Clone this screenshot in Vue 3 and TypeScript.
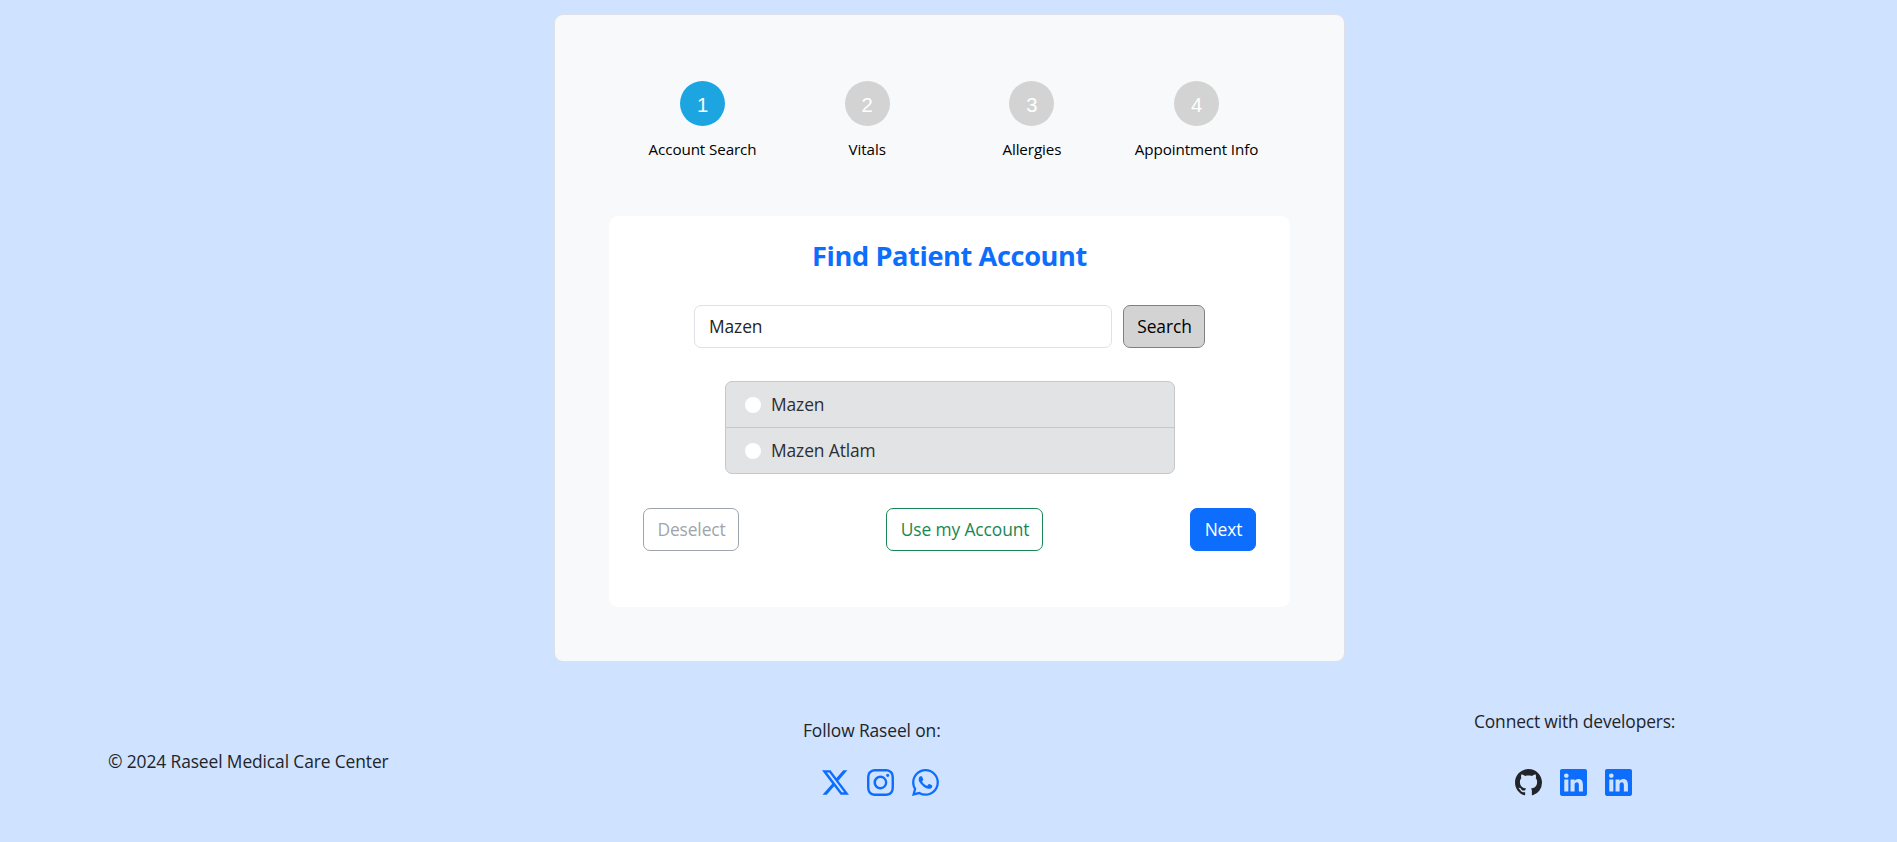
<script setup lang="ts">
import { ref } from 'vue'

interface Step { num: number; label: string }
const steps: Step[] = [
  { num: 1, label: 'Account Search' },
  { num: 2, label: 'Vitals' },
  { num: 3, label: 'Allergies' },
  { num: 4, label: 'Appointment Info' },
]
const current = ref<number>(1)
const query = ref<string>('Mazen')
const results: string[] = ['Mazen', 'Mazen Atlam']
const selected = ref<string>('')

const icons: Record<string, string> = {
  x: 'M12.6.75h2.454l-5.36 6.142L16 15.25h-4.937l-3.867-5.07-4.425 5.07H.316l5.733-6.57L0 .75h5.063l3.495 4.633L12.601.75Zm-.86 13.028h1.36L4.323 2.145H2.865z',
  instagram: 'M8 0C5.829 0 5.556.01 4.703.048 3.85.088 3.269.222 2.76.42a3.9 3.9 0 0 0-1.417.923A3.9 3.9 0 0 0 .42 2.76C.222 3.268.087 3.85.048 4.7.01 5.555 0 5.827 0 8.001c0 2.172.01 2.444.048 3.297.04.852.174 1.433.372 1.942.205.526.478.972.923 1.417.444.445.89.719 1.416.923.51.198 1.09.333 1.942.372C5.555 15.99 5.827 16 8 16s2.444-.01 3.298-.048c.851-.04 1.434-.174 1.943-.372a3.9 3.9 0 0 0 1.416-.923c.445-.445.718-.891.923-1.417.197-.509.332-1.09.372-1.942C15.99 10.445 16 10.173 16 8s-.01-2.445-.048-3.299c-.04-.851-.175-1.433-.372-1.941a3.9 3.9 0 0 0-.923-1.417A3.9 3.9 0 0 0 13.24.42c-.51-.198-1.092-.333-1.943-.372C10.443.01 10.172 0 7.998 0zm-.717 1.442h.718c2.136 0 2.389.007 3.232.046.78.035 1.204.166 1.486.275.373.145.64.319.92.599s.453.546.598.92c.11.281.24.705.275 1.485.039.843.047 1.096.047 3.231s-.008 2.389-.047 3.232c-.035.78-.166 1.203-.275 1.485a2.5 2.5 0 0 1-.599.919c-.28.28-.546.453-.92.598-.28.11-.704.24-1.485.276-.843.038-1.096.047-3.232.047s-2.39-.009-3.233-.047c-.78-.036-1.203-.166-1.485-.276a2.5 2.5 0 0 1-.92-.598 2.5 2.5 0 0 1-.6-.92c-.109-.281-.24-.705-.275-1.485-.038-.843-.046-1.096-.046-3.233s.008-2.388.046-3.231c.036-.78.166-1.204.276-1.486.145-.373.319-.64.599-.92s.546-.453.92-.598c.282-.11.705-.24 1.485-.276.738-.034 1.024-.044 2.515-.045zm4.988 1.328a.96.96 0 1 0 0 1.92.96.96 0 0 0 0-1.92m-4.27 1.122a4.109 4.109 0 1 0 0 8.217 4.109 4.109 0 0 0 0-8.217m0 1.441a2.667 2.667 0 1 1 0 5.334 2.667 2.667 0 0 1 0-5.334',
  whatsapp: 'M13.601 2.326A7.85 7.85 0 0 0 7.994 0C3.627 0 .068 3.558.064 7.926c0 1.399.366 2.76 1.057 3.965L0 16l4.204-1.102a7.9 7.9 0 0 0 3.79.965h.004c4.368 0 7.926-3.558 7.93-7.93A7.9 7.9 0 0 0 13.6 2.326zM7.994 14.521a6.6 6.6 0 0 1-3.356-.92l-.24-.144-2.494.654.666-2.433-.156-.251a6.56 6.56 0 0 1-1.007-3.505c0-3.626 2.957-6.584 6.591-6.584a6.56 6.56 0 0 1 4.66 1.931 6.56 6.56 0 0 1 1.928 4.66c-.004 3.639-2.961 6.592-6.592 6.592m3.615-4.934c-.197-.099-1.17-.578-1.353-.646-.182-.065-.315-.099-.445.099-.133.197-.513.646-.627.775-.114.133-.232.148-.43.05-.197-.1-.836-.308-1.592-.985-.59-.525-.985-1.175-1.103-1.372-.114-.198-.011-.304.088-.403.087-.088.197-.232.296-.346.1-.114.133-.198.198-.33.065-.134.034-.248-.015-.347-.05-.099-.445-1.076-.612-1.47-.16-.389-.323-.335-.445-.34-.114-.007-.247-.007-.38-.007a.73.73 0 0 0-.529.247c-.182.198-.691.677-.691 1.654s.71 1.916.81 2.049c.098.133 1.394 2.132 3.383 2.992.47.205.84.326 1.129.418.475.152.904.129 1.246.08.38-.058 1.171-.48 1.338-.943.164-.464.164-.86.114-.943-.049-.084-.182-.133-.38-.232',
  github: 'M8 0C3.58 0 0 3.58 0 8c0 3.54 2.29 6.53 5.47 7.59.4.07.55-.17.55-.38 0-.19-.01-.82-.01-1.49-2.01.37-2.53-.49-2.69-.94-.09-.23-.48-.94-.82-1.13-.28-.15-.68-.52-.01-.53.63-.01 1.08.58 1.23.82.72 1.21 1.87.87 2.33.66.07-.52.28-.87.51-1.07-1.78-.2-3.64-.89-3.64-3.95 0-.87.31-1.59.82-2.15-.08-.2-.36-1.02.08-2.12 0 0 .67-.21 2.2.82.64-.18 1.32-.27 2-.27s1.36.09 2 .27c1.53-1.04 2.2-.82 2.2-.82.44 1.1.16 1.92.08 2.12.51.56.82 1.27.82 2.15 0 3.07-1.87 3.75-3.65 3.95.29.25.54.73.54 1.48 0 1.07-.01 1.93-.01 2.2 0 .21.15.46.55.38A8.01 8.01 0 0 0 16 8c0-4.42-3.58-8-8-8',
  linkedin: 'M0 1.146C0 .513.526 0 1.175 0h13.65C15.474 0 16 .513 16 1.146v13.708c0 .633-.526 1.146-1.175 1.146H1.175C.526 16 0 15.487 0 14.854zm4.943 12.248V6.169H2.542v7.225zm-1.2-8.212c.837 0 1.358-.554 1.358-1.248-.015-.709-.52-1.248-1.342-1.248S2.4 3.226 2.4 3.934c0 .694.521 1.248 1.327 1.248zm4.908 8.212V9.359c0-.216.016-.432.08-.586.173-.431.568-.878 1.232-.878.869 0 1.216.662 1.216 1.634v3.865h2.401V9.25c0-2.22-1.184-3.252-2.764-3.252-1.274 0-1.845.7-2.165 1.193v.025h-.016l.016-.025V6.169h-2.4c.03.678 0 7.225 0 7.225z',
}
const social: string[] = ['x', 'instagram', 'whatsapp']
const devs: string[] = ['github', 'linkedin', 'linkedin']
</script>

<template>
  <div class="page">
    <main class="card">
      <ol class="stepper">
        <li v-for="s in steps" :key="s.num" class="step">
          <span class="dot" :class="{ active: s.num === current }">{{ s.num }}</span>
          <span class="label">{{ s.label }}</span>
        </li>
      </ol>

      <section class="panel">
        <h1>Find Patient Account</h1>
        <div class="search">
          <input v-model="query" class="field" type="text" />
          <button class="btn find">Search</button>
        </div>
        <div class="results">
          <label v-for="r in results" :key="r" class="item">
            <input v-model="selected" type="radio" name="account" :value="r" />
            <span>{{ r }}</span>
          </label>
        </div>
        <div class="actions">
          <button class="btn deselect">Deselect</button>
          <button class="btn mine">Use my Account</button>
          <button class="btn next">Next</button>
        </div>
      </section>
    </main>

    <footer>
      <p class="copy">© 2024 Raseel Medical Care Center</p>
      <div class="col follow">
        <p>Follow Raseel on:</p>
        <div class="icons">
          <svg v-for="n in social" :key="n" viewBox="0 0 16 16"><path :d="icons[n]" /></svg>
        </div>
      </div>
      <div class="col connect">
        <p>Connect with developers:</p>
        <div class="icons">
          <svg v-for="(n, i) in devs" :key="i" viewBox="0 0 16 16" :class="n"><path :d="icons[n]" /></svg>
        </div>
      </div>
    </footer>
  </div>
</template>

<style>
body { background: #cfe2ff; overflow: hidden; }
</style>

<style scoped>
* { box-sizing: border-box; }
.page {
  height: 842px;
  padding-top: 14px;
  background: #cfe2ff;
  color: #212529;
  font-family: "Segoe UI", "Open Sans", "Noto Sans", sans-serif;
  font-size: 17.4px;
  font-weight: 400;
  letter-spacing: -0.11px;
  line-height: 27px;
}
.card {
  width: 791px;
  height: 648px;
  margin: 0 0 0 554px;
  padding: 66px 54px 0;
  background: #f8f9fa;
  border: 1px solid #dee2e6;
  border-radius: 9px;
}
.stepper {
  display: flex;
  width: 658.7px;
  height: 135px;
  margin: 0 0 0 11.2px;
  padding: 0;
  list-style: none;
}
.step { flex: 1; display: flex; flex-direction: column; align-items: center; }
.dot {
  width: 45px;
  height: 45px;
  padding-top: 2px;
  border-radius: 50%;
  background: #d3d3d3;
  color: #fff;
  font: 20.25px/45px "Liberation Sans", Arial, sans-serif;
  text-align: center;
}
.dot.active { background: #1ca5e0; }
.label { margin-top: 11px; color: #000; font-size: 15.2px; letter-spacing: -0.1px; line-height: 24px; white-space: nowrap; }
.panel {
  width: 681px;
  height: 391px;
  padding-top: 23px;
  background: #fff;
  border-radius: 9px;
}
h1 { margin: 0; color: #0d6efd; font-size: 27.2px; font-weight: 700; letter-spacing: -0.4px; line-height: 34px; text-align: center; }
.search { display: flex; gap: 11px; margin: 32px 0 0 85px; }
.field, .btn {
  height: 43px;
  padding: 0 0 0 1px;
  border: 1px solid;
  border-radius: 7px;
  background: #fff;
  font: inherit;
  letter-spacing: inherit;
  white-space: nowrap;
}
.field { width: 418px; padding: 0 0 1px 14px; border-color: #dee2e6; color: #212529; outline: none; }
.find { width: 82px; background: #d3d3d3; border-color: #808080; color: #000; }
.results { width: 450px; margin: 33px 0 0 116px; border: 1px solid #c4c8cb; border-radius: 7px; background: #e2e3e5; color: #2b2f32; }
.item { display: flex; align-items: center; gap: 10px; height: 45px; padding-left: 19px; }
.item + .item { height: 46px; border-top: 1px solid #c4c8cb; }
.item input { appearance: none; width: 16px; height: 16px; margin: 0; border-radius: 50%; background: #fff; }
.actions { display: flex; justify-content: space-between; width: 613px; margin: 34px 0 0 34px; }
.deselect { width: 96px; color: #6c757d; border-color: #6c757d; opacity: .65; }
.mine { width: 157px; color: #198754; border-color: #198754; }
.next { width: 66px; color: #fff; background: #0d6efd; border-color: #0d6efd; }
footer {
  display: flex;
  height: 153px;
  margin: 27px 14px 0;
  border-top: 1px solid #d5e1f3;
}
p { margin: 0; white-space: nowrap; }
.copy { width: 689px; padding: 58px 0 0 94px; }
.col p { height: 27px; }
.follow { width: 671px; padding: 27px 0 0 100px; }
.follow .icons { margin: 25px 0 0 19px; }
.connect { padding: 18px 0 0 100px; letter-spacing: -0.15px; }
.connect .icons { margin: 34px 0 0 41px; }
.icons { display: flex; gap: 18px; }
svg { width: 27px; height: 27px; fill: #0d6efd; }
svg.github { fill: #212529; }
</style>
